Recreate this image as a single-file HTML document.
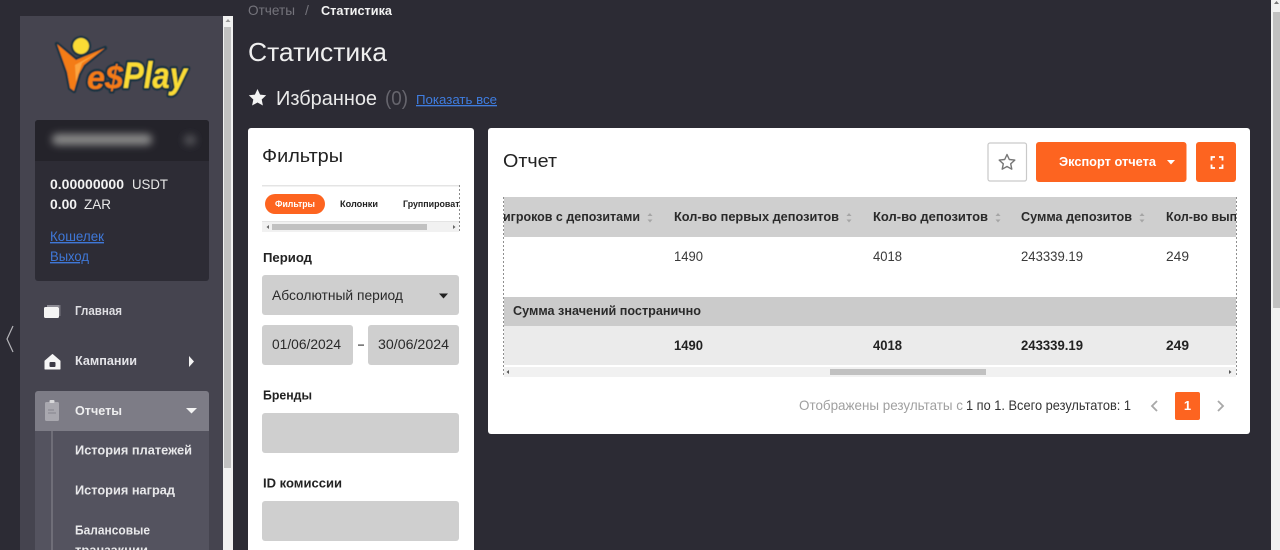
<!DOCTYPE html>
<html lang="ru">
<head>
<meta charset="utf-8">
<title>Статистика</title>
<style>
html,body{margin:0;padding:0;background:#2c2b34;overflow:hidden}
svg{display:block}
text{font-family:"Liberation Sans","DejaVu Sans",sans-serif}
.b{font-weight:700}
</style>
</head>
<body>
<svg width="1280" height="550" viewBox="0 0 1280 550" xmlns="http://www.w3.org/2000/svg">
<defs>
<clipPath id="ct"><rect x="504" y="197" width="732" height="180"/></clipPath>
<clipPath id="cf"><rect x="262" y="185" width="197" height="47"/></clipPath>
<filter id="bl" x="-30%" y="-150%" width="160%" height="400%"><feGaussianBlur stdDeviation="4"/></filter>
<filter id="sf" x="-5%" y="-5%" width="110%" height="110%"><feGaussianBlur stdDeviation="0.4"/></filter>
</defs>

<rect width="1280" height="550" fill="#2c2b34"/>

<!-- main scrollbar -->
<rect x="1271" y="0" width="9" height="550" fill="#f1f1f1"/>
<rect x="1273" y="12" width="7" height="296" fill="#c1c1c1"/>
<path d="M1274 4l2.500-3 2.500 3z" fill="#777"/>

<!-- collapse chevron -->
<path d="M13 326L7 339L13 352" fill="none" stroke="#b4b4b8" stroke-width="1.200"/>

<!-- sidebar -->
<rect x="20" y="16" width="203" height="534" fill="#45444f"/>
<rect x="223" y="16" width="10" height="534" fill="#f1f1f1"/>
<rect x="224" y="27" width="7" height="441" fill="#c1c1c1"/>
<path d="M225.500 22l2.500-3 2.500 3z" fill="#999"/>

<!-- logo -->
<g filter="url(#sf)">
<circle cx="81" cy="46" r="10" fill="#12303f"/>
<path d="M57 44L76 60L105 48L84 65L79 74L74 91L70 88L67 72Z" fill="#f47c12" stroke="#12303f" stroke-width="4" stroke-linejoin="round" paint-order="stroke"/>
<path d="M75 65L99 52L82 63L76 82Z" fill="#fca53f"/>
<circle cx="81" cy="46" r="8" fill="#fadc36"/>
<text x="87" y="89" font-size="33" font-style="italic" class="b" fill="#f47c12" stroke="#12303f" stroke-width="4.500" paint-order="stroke" stroke-linejoin="round" textLength="36" lengthAdjust="spacingAndGlyphs">e$</text>
<text x="123" y="88" font-size="37" font-style="italic" class="b" fill="#fadc36" stroke="#12303f" stroke-width="4.500" paint-order="stroke" stroke-linejoin="round" textLength="64" lengthAdjust="spacingAndGlyphs">Play</text>
</g>

<!-- account box -->
<rect x="35" y="120" width="174" height="161" rx="3" fill="#2d2c35"/>
<path d="M35 161V123a3 3 0 0 1 3-3H206a3 3 0 0 1 3 3V161Z" fill="#24232a"/>
<g filter="url(#bl)">
<rect x="52" y="134" width="100" height="11" rx="5" fill="#8a8a8a"/>
<rect x="184" y="135" width="12" height="10" rx="5" fill="#55545a"/>
</g>
<text x="50" y="189" font-size="14" class="b" fill="#f2f2f2" textLength="74" lengthAdjust="spacingAndGlyphs">0.00000000</text>
<text x="132" y="189" font-size="14" fill="#e8e8e8" textLength="36" lengthAdjust="spacingAndGlyphs">USDT</text>
<text x="50" y="209" font-size="14" class="b" fill="#f2f2f2" textLength="27" lengthAdjust="spacingAndGlyphs">0.00</text>
<text x="84" y="209" font-size="14" fill="#e8e8e8" textLength="27" lengthAdjust="spacingAndGlyphs">ZAR</text>
<text x="50" y="241" font-size="14" fill="#3f78d8" text-decoration="underline" textLength="54" lengthAdjust="spacingAndGlyphs">Кошелек</text>
<text x="50" y="261" font-size="14" fill="#3f78d8" text-decoration="underline" textLength="39" lengthAdjust="spacingAndGlyphs">Выход</text>

<!-- nav -->
<path d="M47 305H60V307H47Z" fill="#8d8c95"/>
<rect x="44" y="307" width="15" height="11" rx="1.500" fill="#f4f4f4"/>
<rect x="59" y="305" width="1.500" height="11" fill="#77767f"/>
<text x="75" y="315" font-size="13" class="b" fill="#dedee2" textLength="47" lengthAdjust="spacingAndGlyphs">Главная</text>

<path d="M45 361L52.500 354.500L60 361V369H45Z" fill="#f6f6f6" stroke="#f6f6f6" stroke-linejoin="round"/>
<rect x="49.500" y="362" width="6" height="5" rx="1" fill="#3c3b46"/>
<text x="75" y="365" font-size="13" class="b" fill="#e4e4e8" textLength="62" lengthAdjust="spacingAndGlyphs">Кампании</text>
<path d="M189 356L194 361.500L189 367Z" fill="#f4f4f4"/>

<path d="M35 431V394a3 3 0 0 1 3-3H206a3 3 0 0 1 3 3V431Z" fill="#7d7c86"/>
<rect x="45" y="402" width="14" height="19" rx="1.500" fill="#a9a8af"/>
<rect x="49.500" y="400" width="5" height="3" rx="1" fill="#d8d8da"/>
<path d="M48 410H54M48 413H56" stroke="#85848e" stroke-width="1"/>
<text x="75" y="415" font-size="13" class="b" fill="#eeeeef" textLength="47" lengthAdjust="spacingAndGlyphs">Отчеты</text>
<path d="M186 408H197L191.500 413.500Z" fill="#f4f4f4"/>

<rect x="35" y="431" width="174" height="119" fill="#54535f"/>
<rect x="51" y="431" width="2" height="119" fill="#6f6e78"/>
<text x="75" y="454.500" font-size="13" class="b" fill="#e8e8ea" textLength="117" lengthAdjust="spacingAndGlyphs">История платежей</text>
<text x="75" y="494.500" font-size="13" class="b" fill="#e8e8ea" textLength="100" lengthAdjust="spacingAndGlyphs">История наград</text>
<text x="75" y="534.500" font-size="13" class="b" fill="#e8e8ea" textLength="75" lengthAdjust="spacingAndGlyphs">Балансовые</text>
<text x="75" y="554.500" font-size="13" class="b" fill="#e8e8ea" textLength="73" lengthAdjust="spacingAndGlyphs">транзакции</text>

<!-- header -->
<text x="248" y="15" font-size="14" fill="#75747c" textLength="47" lengthAdjust="spacingAndGlyphs">Отчеты</text>
<text x="305" y="15" font-size="14" fill="#75747c">/</text>
<text x="321" y="15" font-size="13" class="b" fill="#f2f2f2" textLength="71" lengthAdjust="spacingAndGlyphs">Статистика</text>
<text x="248" y="61" font-size="26" fill="#efefef" textLength="139" lengthAdjust="spacingAndGlyphs">Статистика</text>
<path d="M257.500 89l2.600 5.600 6.100.7-4.500 4.200 1.200 6-5.400-3-5.400 3 1.200-6-4.500-4.200 6.100-.7z" fill="#f4f4f4"/>
<text x="276" y="105" font-size="20" fill="#eaeaea" textLength="101" lengthAdjust="spacingAndGlyphs">Избранное</text>
<text x="385" y="105" font-size="20" fill="#66656d" textLength="23" lengthAdjust="spacingAndGlyphs">(0)</text>
<text x="416" y="104" font-size="13" fill="#3f7de0" text-decoration="underline" textLength="81" lengthAdjust="spacingAndGlyphs">Показать все</text>

<!-- filter card -->
<rect x="248" y="128" width="226" height="430" rx="3" fill="#fff"/>
<text x="262" y="162" font-size="18" fill="#222" textLength="81" lengthAdjust="spacingAndGlyphs">Фильтры</text>
<rect x="262" y="185" width="197" height="1.500" fill="#e4e4e4"/>
<rect x="262" y="221" width="197" height="1" fill="#e4e4e4"/>
<rect x="265" y="194" width="60" height="20" rx="10" fill="#fd6420"/>
<text x="275" y="207" font-size="9" class="b" fill="#fff" textLength="40" lengthAdjust="spacingAndGlyphs">Фильтры</text>
<text x="340" y="207" font-size="9" class="b" fill="#222" textLength="38" lengthAdjust="spacingAndGlyphs">Колонки</text>
<g clip-path="url(#cf)"><text x="403" y="207" font-size="9" class="b" fill="#222" textLength="62" lengthAdjust="spacingAndGlyphs">Группировать</text></g>
<rect x="262" y="222" width="197" height="10" fill="#f1f1f1"/>
<rect x="272" y="224" width="155" height="6" fill="#c1c1c1"/>
<path d="M269 225v4l-2.500-2zM453 225v4l2.500-2z" fill="#666"/>
<path d="M459.500 185V232" stroke="#8a8a8a" stroke-width="1" stroke-dasharray="2 2"/>

<text x="263" y="262" font-size="13" class="b" fill="#222" textLength="49" lengthAdjust="spacingAndGlyphs">Период</text>
<rect x="262" y="275" width="197" height="40" rx="3" fill="#cfcfcf"/>
<text x="272" y="300" font-size="14" fill="#2a2a2a" textLength="131" lengthAdjust="spacingAndGlyphs">Абсолютный период</text>
<path d="M439 293.500H448L443.500 298.500Z" fill="#222"/>
<rect x="262" y="325" width="91" height="40" rx="3" fill="#cfcfcf"/>
<rect x="368" y="325" width="91" height="40" rx="3" fill="#cfcfcf"/>
<text x="272" y="349" font-size="14" fill="#2a2a2a" textLength="69" lengthAdjust="spacingAndGlyphs">01/06/2024</text>
<text x="378" y="349" font-size="14" fill="#2a2a2a" textLength="71" lengthAdjust="spacingAndGlyphs">30/06/2024</text>
<rect x="358" y="344.500" width="6" height="1.200" fill="#444"/>
<text x="263" y="399.500" font-size="13" class="b" fill="#222" textLength="49" lengthAdjust="spacingAndGlyphs">Бренды</text>
<rect x="262" y="413" width="197" height="40" rx="3" fill="#cfcfcf"/>
<text x="263" y="487.500" font-size="13" class="b" fill="#222" textLength="79" lengthAdjust="spacingAndGlyphs">ID комиссии</text>
<rect x="262" y="501" width="197" height="40" rx="3" fill="#cfcfcf"/>

<!-- report card -->
<rect x="488" y="128" width="762" height="306" rx="3" fill="#fff"/>
<text x="503" y="167" font-size="18" fill="#222" textLength="54" lengthAdjust="spacingAndGlyphs">Отчет</text>

<rect x="988" y="143" width="38.500" height="38" rx="2" fill="#fff" stroke="#c9c9c9" stroke-width="1.200"/>
<path d="M1007 154.500l2.300 5 5.500.6-4.100 3.700 1.100 5.400-4.800-2.700-4.800 2.700 1.100-5.400-4.100-3.700 5.500-.6z" fill="none" stroke="#777" stroke-width="1.400" stroke-linejoin="round"/>

<rect x="1036" y="142" width="150.500" height="40" rx="3" fill="#fd6420"/>
<text x="1059" y="166" font-size="13" class="b" fill="#fff" textLength="97" lengthAdjust="spacingAndGlyphs">Экспорт отчета</text>
<path d="M1167 160H1175L1171 164.500Z" fill="#fff"/>
<rect x="1196" y="142" width="40" height="40" rx="3" fill="#fd6420"/>
<path d="M1211.500 160.500V157H1215M1219 157H1222.500V160.500M1222.500 164.500V168H1219M1215 168H1211.500V164.500" fill="none" stroke="#fff" stroke-width="1.800"/>

<!-- table -->
<g clip-path="url(#ct)">
<rect x="503" y="197" width="733" height="40" fill="#cfcfcf"/>
<text x="503" y="221" font-size="13" class="b" fill="#2a2a2a" textLength="137" lengthAdjust="spacingAndGlyphs">игроков с депозитами</text>
<text x="674" y="221" font-size="13" class="b" fill="#2a2a2a" textLength="165" lengthAdjust="spacingAndGlyphs">Кол-во первых депозитов</text>
<text x="873" y="221" font-size="13" class="b" fill="#2a2a2a" textLength="115" lengthAdjust="spacingAndGlyphs">Кол-во депозитов</text>
<text x="1021" y="221" font-size="13" class="b" fill="#2a2a2a" textLength="111" lengthAdjust="spacingAndGlyphs">Сумма депозитов</text>
<text x="1166" y="221" font-size="13" class="b" fill="#2a2a2a" textLength="92" lengthAdjust="spacingAndGlyphs">Кол-во выплат</text>
<path d="M647.500 216L650 213L652.500 216ZM647.500 219.500L650 222.500L652.500 219.500Z" fill="#a5a5a5"/>
<path d="M846.500 216L849 213L851.500 216ZM846.500 219.500L849 222.500L851.500 219.500Z" fill="#a5a5a5"/>
<path d="M995.500 216L998 213L1000.500 216ZM995.500 219.500L998 222.500L1000.500 219.500Z" fill="#a5a5a5"/>
<path d="M1139.500 216L1142 213L1144.500 216ZM1139.500 219.500L1142 222.500L1144.500 219.500Z" fill="#a5a5a5"/>

<text x="674" y="261" font-size="14" fill="#3a3a3a" textLength="29" lengthAdjust="spacingAndGlyphs">1490</text>
<text x="873" y="261" font-size="14" fill="#3a3a3a" textLength="29" lengthAdjust="spacingAndGlyphs">4018</text>
<text x="1021" y="261" font-size="14" fill="#3a3a3a" textLength="62" lengthAdjust="spacingAndGlyphs">243339.19</text>
<text x="1166" y="261" font-size="14" fill="#3a3a3a" textLength="23" lengthAdjust="spacingAndGlyphs">249</text>

<rect x="503" y="297" width="733" height="29" fill="#cbcbcb"/>
<text x="513" y="315" font-size="13" class="b" fill="#2a2a2a" textLength="188" lengthAdjust="spacingAndGlyphs">Сумма значений постранично</text>
<rect x="503" y="326" width="733" height="39" fill="#ebebeb"/>
<text x="674" y="350" font-size="14" class="b" fill="#222" textLength="29" lengthAdjust="spacingAndGlyphs">1490</text>
<text x="873" y="350" font-size="14" class="b" fill="#222" textLength="29" lengthAdjust="spacingAndGlyphs">4018</text>
<text x="1021" y="350" font-size="14" class="b" fill="#222" textLength="62" lengthAdjust="spacingAndGlyphs">243339.19</text>
<text x="1166" y="350" font-size="14" class="b" fill="#222" textLength="23" lengthAdjust="spacingAndGlyphs">249</text>

<rect x="503" y="367" width="733" height="10" fill="#f1f1f1"/>
<rect x="830" y="369" width="156" height="6" fill="#c1c1c1"/>
<path d="M509 370v4l-2.500-2zM1229 370v4l2.500-2z" fill="#555"/>
</g>
<path d="M503.500 197V377M1236.500 197V377" stroke="#8f8f8f" stroke-width="1" stroke-dasharray="2 2"/>

<!-- pagination -->
<text x="799" y="410" font-size="14" fill="#a0a0a0" textLength="164" lengthAdjust="spacingAndGlyphs">Отображены результаты с</text>
<text x="966" y="410" font-size="14" fill="#333" textLength="165" lengthAdjust="spacingAndGlyphs">1 по 1. Всего результатов: 1</text>
<path d="M1157 401L1152 406L1157 411" fill="none" stroke="#a8a8a8" stroke-width="1.800"/>
<rect x="1175" y="392" width="25" height="28" rx="2" fill="#fd6420"/>
<text x="1187.500" y="410" font-size="13" class="b" fill="#fff" text-anchor="middle">1</text>
<path d="M1218 401L1223 406L1218 411" fill="none" stroke="#a8a8a8" stroke-width="1.800"/>
</svg>
</body>
</html>
